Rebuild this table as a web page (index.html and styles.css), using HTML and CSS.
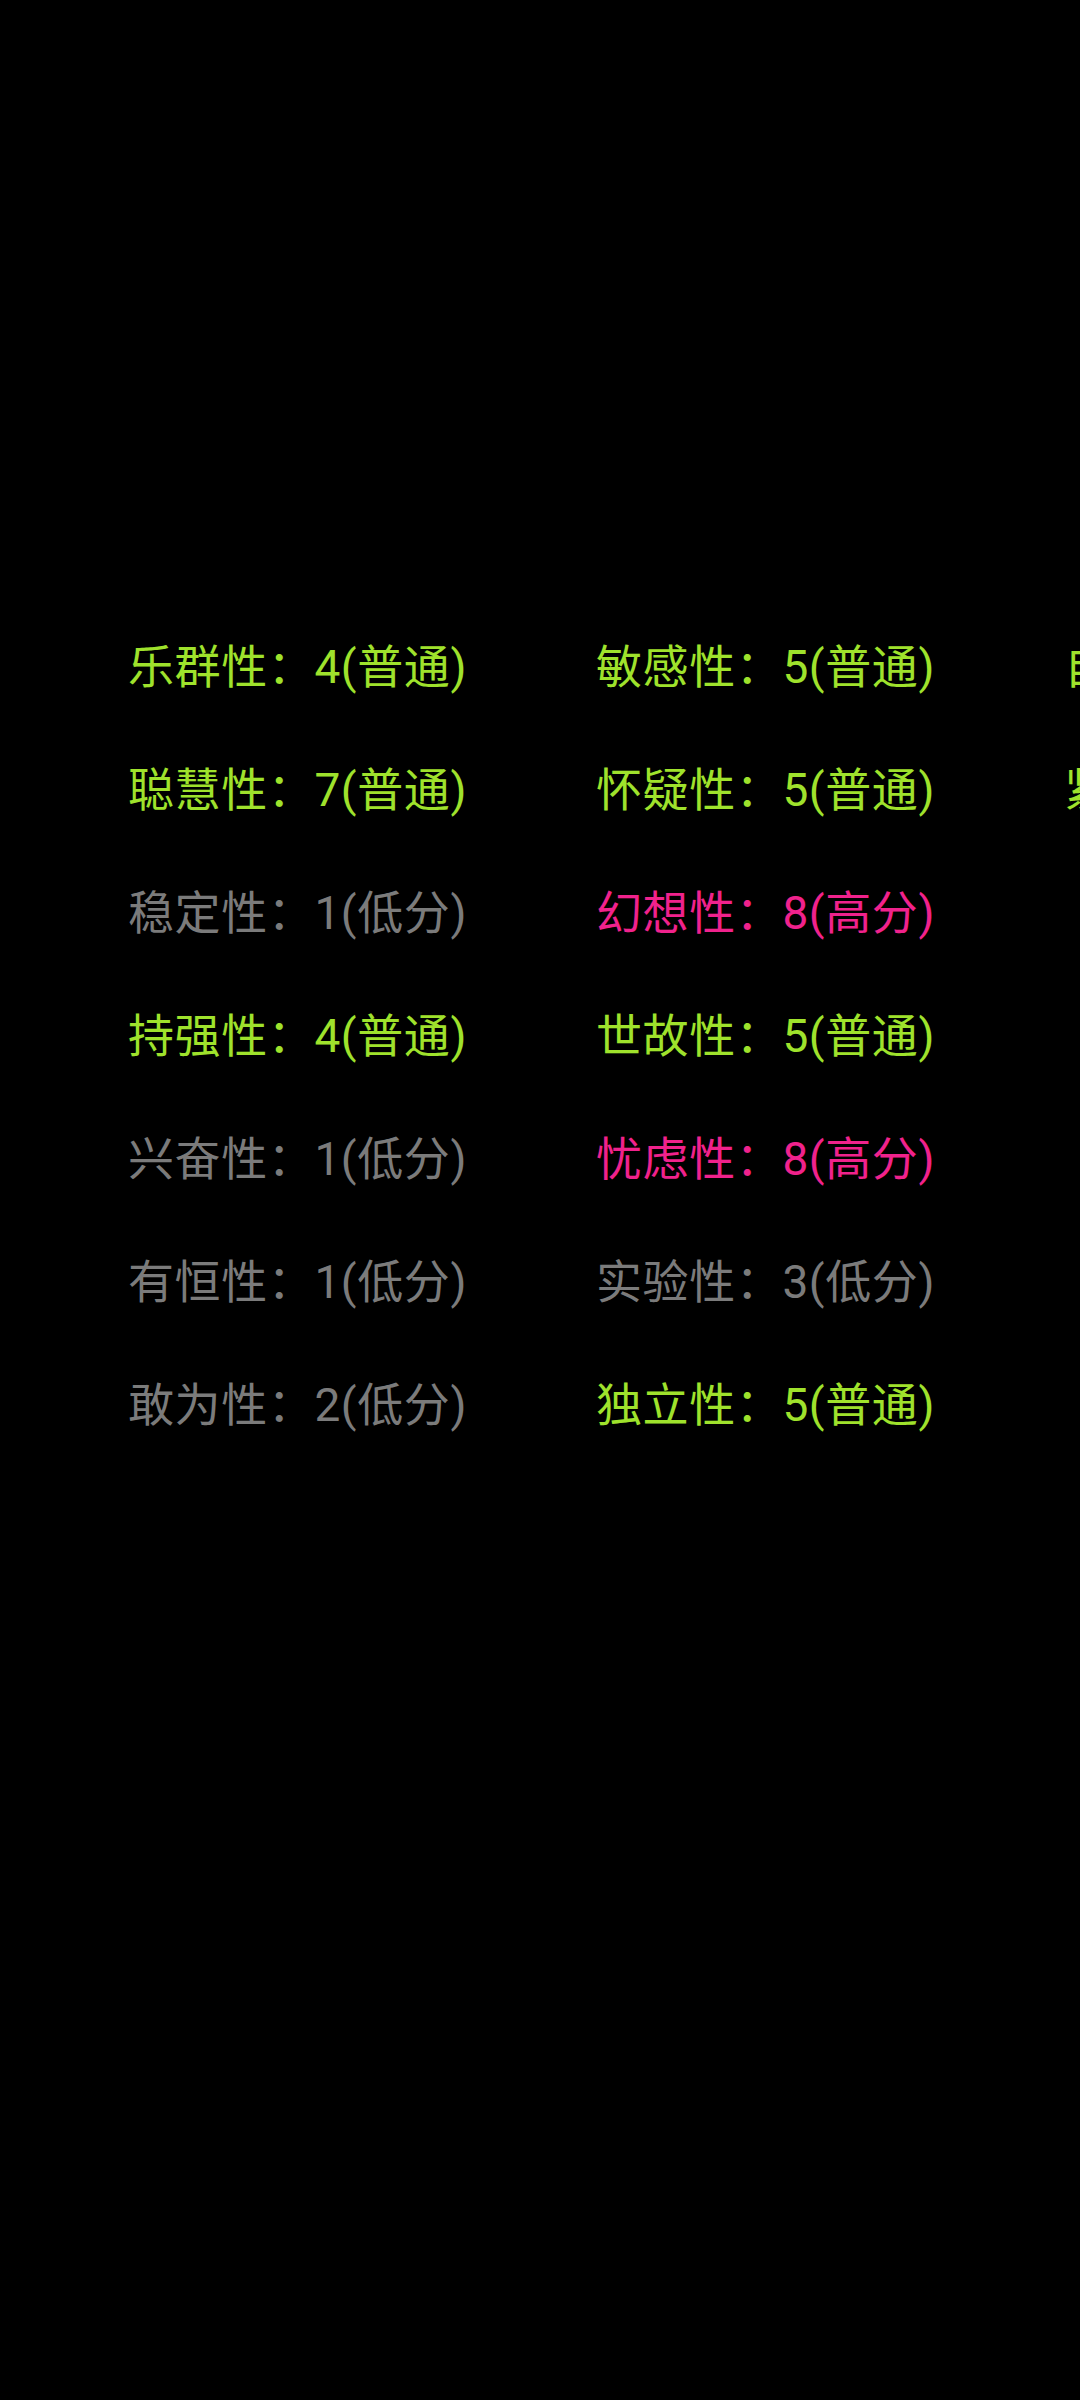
FILE: index.html
```html
<!DOCTYPE html>
<html lang="zh-CN">
<head>
<meta charset="utf-8">
<title>16PF</title>
<link rel="stylesheet" href="styles.css">
</head>
<body>
<main class="grid">
  <div class="item normal">乐群性：4(普通)</div>
  <div class="item normal">聪慧性：7(普通)</div>
  <div class="item low">稳定性：1(低分)</div>
  <div class="item normal">持强性：4(普通)</div>
  <div class="item low">兴奋性：1(低分)</div>
  <div class="item low">有恒性：1(低分)</div>
  <div class="item low">敢为性：2(低分)</div>
  <div class="item normal">敏感性：5(普通)</div>
  <div class="item normal">怀疑性：5(普通)</div>
  <div class="item high">幻想性：8(高分)</div>
  <div class="item normal">世故性：5(普通)</div>
  <div class="item high">忧虑性：8(高分)</div>
  <div class="item low">实验性：3(低分)</div>
  <div class="item normal">独立性：5(普通)</div>
  <div class="item normal">自律性：5(普通)</div>
  <div class="item normal">紧张性：5(普通)</div>
</main>
</body>
</html>
```
FILE: styles.css
```css
html, body {
  margin: 0;
  padding: 0;
  background: #000;
  overflow: hidden;
}
body {
  width: 1080px;
  height: 2400px;
  font-family: Roboto, "Noto Sans CJK SC", sans-serif;
}
.grid {
  display: grid;
  grid-auto-flow: column;
  grid-template-rows: repeat(7, 123px);
  grid-auto-columns: 468px;
  padding: 606px 0 0 128px;
}
.item {
  font-size: 46px;
  line-height: 123px;
  letter-spacing: 0.6px;
  white-space: nowrap;
}
.normal { color: #9fe22c; }
.low { color: #7b7b7b; }
.high { color: #f0228c; }
```
